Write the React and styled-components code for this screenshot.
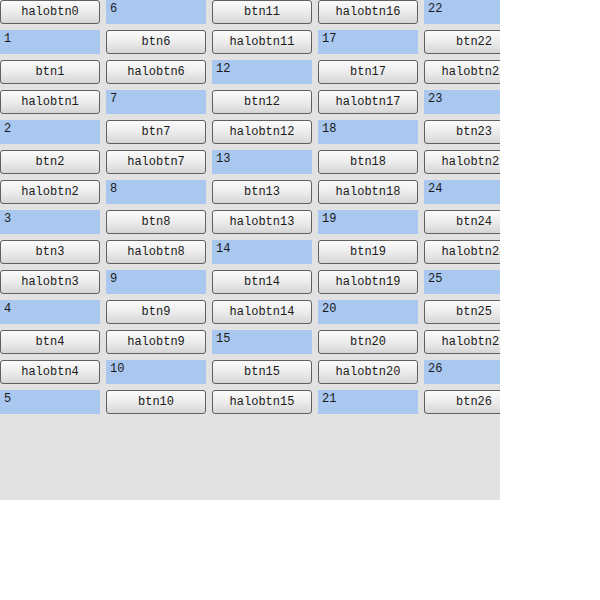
import styled, { createGlobalStyle } from 'styled-components';

const GlobalStyle = createGlobalStyle`
    body {
        margin: 0;
        background: #ffffff;
        font-family: "Liberation Mono", monospace;
    }
`;

const Board = styled.div`
    width: 500px;
    height: 500px;
    background-color: #e2e2e2;
    overflow: hidden;
`;

const Grid = styled.div`
    display: grid;
    grid-auto-flow: column;
    grid-template-rows: repeat(14, 24px);
    grid-auto-columns: 100px;
    column-gap: 6px;
    row-gap: 6px;
`;

const Button = styled.button`
    box-sizing: border-box;
    width: 100px;
    height: 24px;
    margin: 0;
    padding: 0;
    border: 1px solid #606060;
    border-radius: 3px;
    background: linear-gradient(to bottom, #fbfbfb 0%, #ececec 50%, #d6d6d6 100%);
    font-family: "Liberation Mono", monospace;
    font-size: 12px;
    color: #1a1a1a;
    text-align: center;
    line-height: 22px;
    white-space: nowrap;
    overflow: hidden;
`;

const Label = styled.div`
    box-sizing: border-box;
    width: 100px;
    height: 24px;
    padding: 2px 4px;
    background-color: #a9c7ef;
    font-size: 12px;
    line-height: 14px;
    color: #1a1a1a;
`;

// full run is label n, btn n, halobtn n ... each column shows 14 of every 16
const sequence = [];
for (let n = 0; n <= 26; n++) {
    sequence.push({ kind: 'label', text: String(n) });
    sequence.push({ kind: 'btn', text: `btn${n}` });
    sequence.push({ kind: 'btn', text: `halobtn${n}` });
}

const items = [];
for (let c = 0; c < 5; c++) {
    const start = 2 + c * 16;
    items.push(...sequence.slice(start, start + 14));
}

function App() {
    return (
        <>
            <GlobalStyle />
            <Board>
                <Grid>
                    {items.map((item, i) =>
                        item.kind === 'label' ? (
                            <Label key={i}>{item.text}</Label>
                        ) : (
                            <Button key={i}>{item.text}</Button>
                        )
                    )}
                </Grid>
            </Board>
        </>
    );
}

export default App;
